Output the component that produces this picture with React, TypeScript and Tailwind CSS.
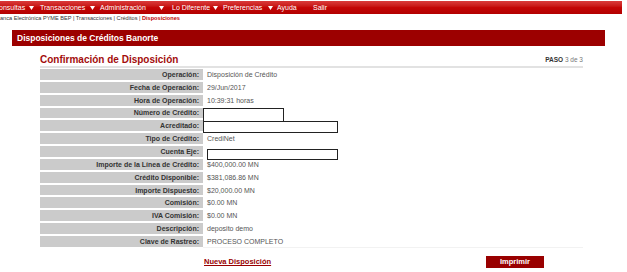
import React from "react";

const rows: [string, string][] = [
  ["Operación:", "Disposición de Crédito"],
  ["Fecha de Operación:", "29/Jun/2017"],
  ["Hora de Operación:", "10:39:31 horas"],
  ["Número de Crédito:", ""],
  ["Acreditado:", ""],
  ["Tipo de Crédito:", "CrediNet"],
  ["Cuenta Eje:", ""],
  ["Importe de la Línea de Crédito:", "$400,000.00 MN"],
  ["Crédito Disponible:", "$381,086.86 MN"],
  ["Importe Dispuesto:", "$20,000.00 MN"],
  ["Comisión:", "$0.00 MN"],
  ["IVA Comisión:", "$0.00 MN"],
  ["Descripción:", "deposito demo"],
  ["Clave de Rastreo:", "PROCESO COMPLETO"],
];

function Arrow({ w }: { w: string }) {
  return (
    <span className={`${w} flex items-center`}>
      <svg width="5" height="4" viewBox="0 0 5 4">
        <polygon points="0,0 5,0 2.5,4" fill="#ffffff" />
      </svg>
    </span>
  );
}

export default function App() {
  return (
    <div className="w-[627px] h-[272px] bg-white overflow-hidden font-['Liberation_Sans',Arial,sans-serif]">
      <div className="pt-[1px]">
        <nav className="h-[13px] w-[622px] bg-gradient-to-b from-[#da3a3a] via-[#c40606] to-[#b30000] flex items-center text-white text-[7px] leading-none whitespace-nowrap overflow-hidden">
          <span className="w-[35px] ml-[-6px] shrink-0">Consultas</span>
          <Arrow w="w-[11px] shrink-0" />
          <span className="w-[50px] shrink-0">Transacciones</span>
          <Arrow w="w-[10px] shrink-0" />
          <span className="w-[59px] shrink-0">Administración</span>
          <Arrow w="w-[13px] shrink-0" />
          <span className="w-[41px] shrink-0">Lo Diferente</span>
          <Arrow w="w-[10px] shrink-0" />
          <span className="w-[45px] shrink-0">Preferencias</span>
          <Arrow w="w-[9px] shrink-0" />
          <span className="w-[36px] shrink-0">Ayuda</span>
          <span className="shrink-0">Salir</span>
        </nav>
      </div>
      <div className="h-[8px] text-[5.6px] leading-[8px] text-[#333333] whitespace-nowrap">
        anca Electrónica PYME BEP | Transacciones | Créditos |{" "}
        <span className="text-[#c00000] font-bold">Disposiciones</span>
      </div>
      <div className="mt-[8px] ml-[12px] w-[593px] h-[16px] bg-[#9c0000] flex items-center pl-[5px] text-white font-bold text-[8.5px] leading-none">
        Disposiciones de Créditos Banorte
      </div>
      <div className="ml-[40px] w-[543px]">
        <div className="flex items-end justify-between h-[12px] mt-[7px]">
          <span className="text-[10px] leading-none font-bold text-[#a30c0c]">
            Confirmación de Disposición
          </span>
          <span className="text-[6.5px] leading-none text-[#777777] mb-[2px]">
            <span className="font-bold text-[#333333]">PASO</span> 3 de 3
          </span>
        </div>
        <div className="mt-[1px] h-[2px] bg-[#e2e2e2]" />
        <div className="relative mt-[1px] grid grid-cols-[163px_1fr] auto-rows-[10.85px] gap-y-[2px] text-[7px] leading-none">
          {rows.map(([label, value]) => (
            <React.Fragment key={label}>
              <div className="bg-[#cbcbcb] flex items-center justify-end pr-[4px] font-bold text-[#333333] whitespace-nowrap">
                {label}
              </div>
              <div className="flex items-center pl-[4px] text-[#555555] whitespace-nowrap">{value}</div>
            </React.Fragment>
          ))}
          <div className="absolute left-[163px] top-[39px] w-[81px] h-[14px] bg-white border border-[#222222]" />
          <div className="absolute left-[163px] top-[52px] w-[135px] h-[12px] bg-white border border-[#222222]" />
          <div className="absolute left-[167px] top-[80px] w-[131px] h-[11px] bg-white border border-[#222222]" />
        </div>
        <div className="ml-[163px] h-[1px] bg-[#f2f2f2]" />
        <div className="flex items-center h-[12px] mt-[8px]">
          <a className="ml-[164px] text-[7.5px] leading-none font-bold text-[#990000] underline">
            Nueva Disposición
          </a>
          <button className="ml-auto mr-[39px] w-[58px] h-[12px] bg-[#990000] text-white font-bold text-[7.5px] leading-none flex items-center justify-center">
            Imprimir
          </button>
        </div>
      </div>
    </div>
  );
}
